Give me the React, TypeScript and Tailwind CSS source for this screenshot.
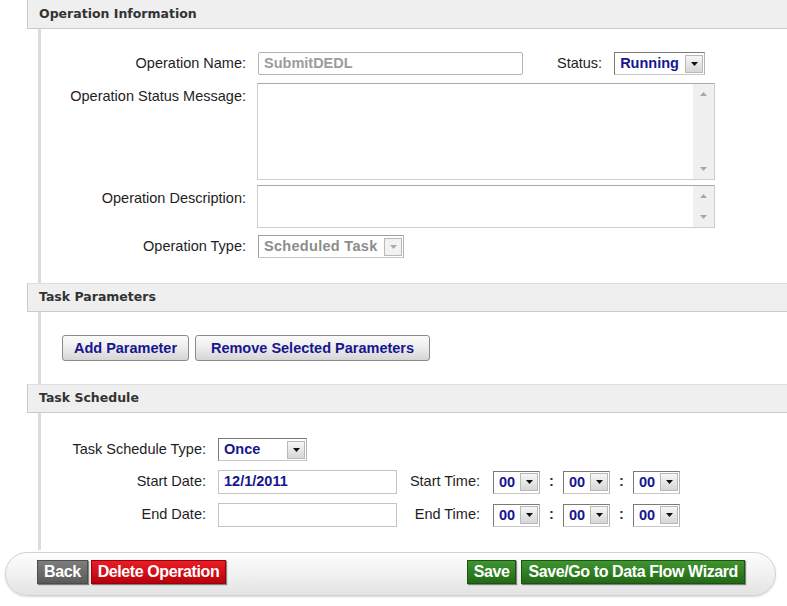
import React from "react";

const navy = "text-[#16168f]";

function Arrow({ color = "#111" }: { color?: string }) {
  return (
    <svg width="7" height="4" viewBox="0 0 7 4">
      <path d="M0 0h7L3.5 4z" fill={color} />
    </svg>
  );
}

function Select({
  value,
  width,
  disabled,
}: {
  value: string;
  width: string;
  disabled?: boolean;
}) {
  return (
    <div
      className={`${width} h-[23px] flex items-center bg-white border border-t-[#7a7a7a] border-l-[#7a7a7a] border-r-[#b5b5b5] border-b-[#c8c8c8] ${
        disabled ? "border-t-[#a0a0a0] border-l-[#a0a0a0]" : ""
      }`}
    >
      <span
        className={`flex-1 pl-[5px] text-[14.5px] font-bold leading-none ${
          disabled ? "text-[#8c8c8c] tracking-[0.3px]" : navy
        }`}
      >
        {value}
      </span>
      <div
        className={`w-[18px] h-[18px] mr-[1px] flex items-center justify-center border border-[#b9b9b9] ${
          disabled ? "bg-[#f2f2f2]" : "bg-gradient-to-b from-[#f7f7f7] to-[#d6d6d6]"
        }`}
      >
        <Arrow color={disabled ? "#aaa" : "#111"} />
      </div>
    </div>
  );
}

function TextArea({ height }: { height: string }) {
  return (
    <div className={`w-[458px] ${height} flex bg-white border border-[#cfcfcf] border-t-[#a9a9a9]`}>
      <div className="flex-1" />
      <div className="w-[21px] bg-[#f0f0f0] flex flex-col items-center justify-between py-[8px]">
        <svg width="7" height="4" viewBox="0 0 7 4">
          <path d="M0 4h7L3.5 0z" fill="#a8a8a8" />
        </svg>
        <Arrow color="#a8a8a8" />
      </div>
    </div>
  );
}

function Header({ title, top }: { title: string; top?: boolean }) {
  return (
    <div
      className={`ml-[27px] h-[29px] bg-[#efefef] border-l border-b border-[#cacaca] flex items-center pl-[11px] ${
        top ? "border-t border-t-[#dedede]" : ""
      }`}
    >
      <span className="font-['DejaVu_Sans',sans-serif] font-bold text-[12.5px] text-[#333]">{title}</span>
    </div>
  );
}

function Body({ className, children }: { className: string; children: React.ReactNode }) {
  return (
    <div className={`ml-[38px] border-l-[3px] border-[#dcdcdc] ${className}`}>{children}</div>
  );
}

function BlueButton({ label, w }: { label: string; w: string }) {
  return (
    <button
      className={`${w} h-[26px] rounded-[3px] border border-[#8c8c8c] bg-gradient-to-b from-[#fbfbfb] via-[#ececec] to-[#d5d5d5] ${navy} font-bold text-[14.5px] leading-none`}
    >
      {label}
    </button>
  );
}

function FootButton({ label, tone }: { label: string; tone: "gray" | "red" | "green" }) {
  const bg =
    tone === "gray"
      ? "bg-gradient-to-b from-[#7d7d7d] to-[#5b5b5b] border-[#4d4d4d]"
      : tone === "red"
      ? "bg-gradient-to-b from-[#ea1c26] to-[#b90009] border-[#9a0008]"
      : "bg-gradient-to-b from-[#3f9430] to-[#226a15] border-[#1b5310]";
  return (
    <button
      className={`h-[24px] px-[6px] border ${bg} text-white font-bold text-[16px] tracking-[-0.4px] leading-none shadow-[1px_1px_1px_rgba(0,0,0,0.45)]`}
    >
      {label}
    </button>
  );
}

function TimeSelects() {
  return (
    <div className="ml-[13px] flex items-center">
      <Select value="00" width="w-[47px]" />
      <span className="w-[23px] text-center font-bold text-[#333]">:</span>
      <Select value="00" width="w-[47px]" />
      <span className="w-[23px] text-center font-bold text-[#333]">:</span>
      <Select value="00" width="w-[47px]" />
    </div>
  );
}

export default function App() {
  return (
    <div className="w-[787px] h-[606px] bg-white overflow-hidden font-['Liberation_Sans',Arial,sans-serif] text-[14.5px] text-[#1e1e1e]">
      <Header title="Operation Information" />
      <Body className="pt-[23px] pb-[25px]">
        <div className="flex items-center h-[23px]">
          <div className="w-[205px] text-right">Operation Name:</div>
          <div className="ml-[12px] w-[265px] h-[23px] border border-[#b4b4b4] rounded-[2px] flex items-center pl-[5px] font-bold text-[#9c9c9c]">
            SubmitDEDL
          </div>
          <div className="ml-[34px]">Status:</div>
          <div className="ml-[12px]">
            <Select value="Running" width="w-[91px]" />
          </div>
        </div>
        <div className="flex mt-[8px]">
          <div className="w-[205px] text-right pt-[3px]">Operation Status Message:</div>
          <div className="ml-[11px]">
            <TextArea height="h-[97px]" />
          </div>
        </div>
        <div className="flex mt-[5px]">
          <div className="w-[205px] text-right pt-[3px]">Operation Description:</div>
          <div className="ml-[11px]">
            <TextArea height="h-[43px]" />
          </div>
        </div>
        <div className="flex items-center mt-[7px]">
          <div className="w-[205px] text-right">Operation Type:</div>
          <div className="ml-[12px]">
            <Select value="Scheduled Task" width="w-[146px]" disabled />
          </div>
        </div>
      </Body>

      <Header title="Task Parameters" top />
      <Body className="pt-[23px] pb-[23px] pl-[21px] flex gap-[6px]">
        <BlueButton label="Add Parameter" w="w-[127px]" />
        <BlueButton label="Remove Selected Parameters" w="w-[235px]" />
      </Body>

      <Header title="Task Schedule" top />
      <Body className="pt-[25px] pb-[23px]">
        <div className="flex items-center h-[23px]">
          <div className="w-[165px] text-right">Task Schedule Type:</div>
          <div className="ml-[12px]">
            <Select value="Once" width="w-[89px]" />
          </div>
        </div>
        <div className="flex items-center mt-[9px] h-[24px]">
          <div className="w-[165px] text-right">Start Date:</div>
          <div className={`ml-[12px] w-[179px] h-[24px] border border-[#c4c4c4] flex items-center pl-[5px] font-bold ${navy}`}>
            12/1/2011
          </div>
          <div className="w-[83px] text-right">Start Time:</div>
          <TimeSelects />
        </div>
        <div className="flex items-center mt-[9px] h-[24px]">
          <div className="w-[165px] text-right">End Date:</div>
          <div className="ml-[12px] w-[179px] h-[24px] border border-[#c4c4c4]" />
          <div className="w-[83px] text-right">End Time:</div>
          <TimeSelects />
        </div>
      </Body>

      <div className="ml-[5px] mt-[2px] w-[771px] h-[44px] rounded-full border border-[#d2d2d2] bg-gradient-to-b from-[#fdfdfd] via-[#f1f1f1] to-[#e3e3e3] shadow-[0_1px_2px_rgba(0,0,0,0.15)] flex items-start pt-[7px] pl-[31px] pr-[30px]">
        <div className="flex gap-[3px]">
          <FootButton label="Back" tone="gray" />
          <FootButton label="Delete Operation" tone="red" />
        </div>
        <div className="ml-auto flex gap-[5px]">
          <FootButton label="Save" tone="green" />
          <FootButton label="Save/Go to Data Flow Wizard" tone="green" />
        </div>
      </div>
    </div>
  );
}
